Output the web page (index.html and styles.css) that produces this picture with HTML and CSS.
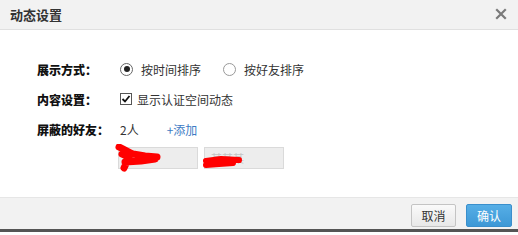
FILE: index.html
```html
<!DOCTYPE html>
<html>
<head>
<meta charset="utf-8">
<link rel="stylesheet" href="styles.css">
</head>
<body>
<div class="dialog">
  <div class="header">
    <span class="title">动态设置</span>
    <svg class="close" width="12" height="12" viewBox="0 0 12 12"><path d="M2 2 L10 10 M10 2 L2 10" stroke="#7a7a7a" stroke-width="2.2" stroke-linecap="square"/></svg>
  </div>
  <div class="body">
    <div class="row">
      <div class="label">展示方式：</div>
      <div class="field">
        <span class="opt"><span class="radio checked"></span>按时间排序</span>
        <span class="opt opt2"><span class="radio"></span>按好友排序</span>
      </div>
    </div>
    <div class="row">
      <div class="label">内容设置：</div>
      <div class="field">
        <span class="opt"><svg class="check" width="12" height="12" viewBox="0 0 12 12"><rect x="0.5" y="0.5" width="11" height="11" fill="#fff" stroke="#555"/><path d="M2.5 6 L5 8.5 L9.5 3" fill="none" stroke="#111" stroke-width="1.8"/></svg>显示认证空间动态</span>
      </div>
    </div>
    <div class="row">
      <div class="label">屏蔽的好友：</div>
      <div class="field">
        <span class="count">2人</span>
        <a class="add">+添加</a>
      </div>
    </div>
    <div class="friends">
      <div class="friend">
        <span class="ghost">某某</span>
        <svg class="scribble" width="50" height="34" viewBox="0 0 50 34"><path d="M4 3 C9 5 13 8 18 10 L30 12 L42 13 M7 10 L14 13 L9 24 M10 18 L26 17 L40 15" fill="none" stroke="#f00" stroke-width="7" stroke-linecap="round" stroke-linejoin="round"/></svg>
      </div>
      <div class="friend">
        <span class="ghost">某某某</span>
        <svg class="scribble s2" width="46" height="24" viewBox="0 0 46 24"><path d="M5 12 L20 10 L38 11 M5 16 L18 15 L32 14" fill="none" stroke="#f00" stroke-width="6" stroke-linecap="round" stroke-linejoin="round"/></svg>
      </div>
    </div>
  </div>
  <div class="footer">
    <button class="btn cancel">取消</button>
    <button class="btn ok">确认</button>
  </div>
</div>
</body>
</html>
```
FILE: styles.css
```css
html, body {
  margin: 0;
  padding: 0;
  background: #fff;
}
body {
  font-family: "Noto Sans CJK SC", "Liberation Sans", sans-serif;
  font-size: 12px;
  color: #333;
}
.dialog {
  width: 518px;
  height: 235px;
  display: flex;
  flex-direction: column;
  overflow: hidden;
}
.header {
  height: 29px;
  border-bottom: 1px solid #e0e0e0;
  background: #f2f2f2;
  display: flex;
  align-items: center;
  justify-content: space-between;
  padding: 0 11px 0 10px;
}
.title {
  font-size: 13px;
  font-weight: bold;
  color: #333;
}
.close {
  margin-top: -1px;
}
.body {
  height: 167px;
  padding-top: 24px;
  box-sizing: border-box;
}
.row {
  height: 30px;
  display: flex;
  align-items: center;
}
.label {
  width: 83px;
  padding-left: 37px;
  font-weight: 900;
  color: #111;
}
.field {
  display: flex;
  align-items: center;
}
.opt {
  display: flex;
  align-items: center;
  color: #333;
}
.opt2 {
  margin-left: 22px;
}
.radio {
  width: 11px;
  height: 11px;
  border: 1px solid #666;
  border-radius: 50%;
  box-sizing: content-box;
  margin-right: 8px;
  position: relative;
  background: #fff;
}
.radio.checked::after {
  content: "";
  position: absolute;
  left: 2.5px;
  top: 2.5px;
  width: 6px;
  height: 6px;
  border-radius: 50%;
  background: #222;
}
.opt2 .radio {
  border-color: #999;
}
.check {
  margin-right: 5px;
}
.count {
  color: #333;
}
.add {
  margin-left: 28px;
  color: #3d7bc4;
}
.friends {
  display: flex;
  gap: 6px;
  padding-left: 118px;
  margin-top: 3px;
}
.friend {
  width: 80px;
  height: 22px;
  box-sizing: border-box;
  background: #ededed;
  border: 1px solid #dadada;
  position: relative;
  color: #888;
  font-size: 11px;
  line-height: 20px;
  padding-left: 6px;
}
.ghost {
  opacity: 0.4;
}
.scribble {
  position: absolute;
  left: -4px;
  top: -4px;
}
.scribble.s2 {
  left: -4px;
  top: 1px;
}
.footer {
  height: 35px;
  border-top: 1px solid #e6e6e6;
  border-bottom: 3px solid #555;
  background: #f2f2f2;
  box-sizing: border-box;
  display: flex;
  justify-content: flex-end;
  align-items: flex-start;
  padding: 6px 6px 0 0;
  gap: 10px;
}
.btn {
  height: 23px;
  width: 45px;
  font-family: "Noto Sans CJK SC", sans-serif;
  font-size: 12px;
  padding: 0;
  border-radius: 2px;
  cursor: pointer;
}
.cancel {
  background: linear-gradient(#fafafa, #e8e8e8);
  border: 1px solid #c4c4c4;
  color: #333;
}
.ok {
  width: 46px;
  background: linear-gradient(#56aee6, #3d98d6);
  border: 1px solid #3a8fcc;
  color: #fff;
}
```
